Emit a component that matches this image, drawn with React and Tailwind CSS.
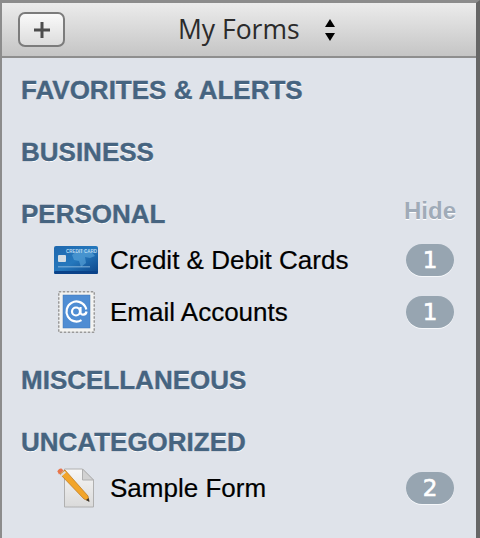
import React from 'react';

const CardIcon = () => (
  <svg width="44" height="28" viewBox="0 0 44 28">
    <defs>
      <linearGradient id="card" x1="0" y1="0" x2="1" y2="1">
        <stop offset="0" stopColor="#1f68ae" />
        <stop offset="0.5" stopColor="#2578bd" />
        <stop offset="1" stopColor="#0b4488" />
      </linearGradient>
    </defs>
    <rect width="44" height="28" rx="2" fill="url(#card)" />
    <path d="M18 9c4-4 10-6 15-5 3 1 6 3 8 6l-5 2-5-1 1 6-5 4-2-6-5-1z" fill="#62acdf" opacity="0.55" />
    <text x="12" y="7" fontSize="4.500" fontWeight="700" fill="#bcdcf2" fontFamily="Liberation Sans, sans-serif">CREDIT CARD</text>
    <rect x="4" y="9" width="8" height="7" rx="1" fill="#d3dde4" />
    <rect x="4" y="20" width="32" height="1.500" fill="#8fbde0" opacity="0.6" />
    <rect y="25" width="44" height="3" rx="1.500" fill="#0a4289" />
  </svg>
);

const StampIcon = () => (
  <svg width="37" height="42" viewBox="0 0 37 42">
    <rect x="0.750" y="0.750" width="35.500" height="40.500" fill="#f3f3f1" stroke="#9a9a9a" strokeWidth="1.500" strokeDasharray="2.500 1.500" />
    <rect x="5" y="4" width="27" height="33" fill="#4f8dd3" stroke="#3d76b8" strokeWidth="0.500" />
    <circle cx="18.500" cy="20.500" r="10" fill="none" stroke="#fff" strokeWidth="2.200" strokeDasharray="50 13" transform="rotate(60 18.500 20.500)" />
    <circle cx="18" cy="20.500" r="4" fill="none" stroke="#fff" strokeWidth="2.200" />
    <path d="M22.500 16v5.500c0 3 5.500 3 6-1" fill="none" stroke="#fff" strokeWidth="2.200" />
  </svg>
);

const DocIcon = () => (
  <svg width="38" height="40" viewBox="0 0 38 40">
    <defs>
      <linearGradient id="doc" x1="0" y1="0" x2="0" y2="1">
        <stop offset="0" stopColor="#f7f7f7" />
        <stop offset="1" stopColor="#dadada" />
      </linearGradient>
    </defs>
    <path d="M7.500 1h18l11 11v27h-29z" fill="url(#doc)" stroke="#b0b0b0" strokeWidth="1" />
    <path d="M25.500 1v11h11z" fill="#d2d2d2" stroke="#b0b0b0" strokeWidth="1" />
    <path d="M3 6l5-4 23 26 1 5-5-2z" fill="#f2a52a" stroke="#b9741a" strokeWidth="0.700" />
    <path d="M0.500 3.500c0-2 2.500-3.500 4-3l2 2-4.500 4z" fill="#e8754a" />
    <path d="M3 7l4.500-4 1.500 1.500-4.500 4z" fill="#dcdcdc" />
    <path d="M29 32l2.500-2 1 4z" fill="#333" />
  </svg>
);

const Badge = ({ count }) => (
  <span className="flex h-8 w-12 items-center justify-center rounded-full bg-[#97a5b1] text-[23px] text-white shadow-[0_1px_0_#f5f7fa] [-webkit-text-stroke:0.6px_#ffffff] font-['DejaVu_Sans',sans-serif]">
    {count}
  </span>
);

const Row = ({ icon, label, count }) => (
  <div className="flex h-[52px] items-center pl-[52px] pr-[22px]">
    <div className="flex w-[56px] justify-center pr-[12px]">{icon}</div>
    <span className="flex-1 pt-px text-[26px] text-black [-webkit-text-stroke:0.2px_#000000] font-['Liberation_Sans',sans-serif]">{label}</span>
    <Badge count={count} />
  </div>
);

const Section = ({ title, action, children }) => (
  <section className="pb-5">
    <div className="flex h-[42px] items-center justify-between pt-0.5 pl-[19px] pr-5">
      <h2 className="text-[26px] font-bold text-[#466480] [-webkit-text-stroke:0.4px_#466480] [text-shadow:0_1px_0_#fff] font-['Liberation_Sans',sans-serif]">{title}</h2>
      {action && <span className="text-[24px] font-bold text-[#a0abb8] [text-shadow:0_1px_0_#fff] -translate-y-[3px] font-['Liberation_Sans',sans-serif]">{action}</span>}
    </div>
    {children}
  </section>
);

const App = () => {
  return (
    <div className="h-[538px] w-[480px] overflow-hidden border-t-[3px] border-r-4 border-l-2 border-t-[#8c8c8c] border-r-[#666666] border-l-[#8c8c8c] bg-[#dfe3ea]">
      <header className="flex h-[55px] items-center border-b-2 border-[#8e8e8e] bg-gradient-to-b from-[#ececec] to-[#c5c5c5] pl-4">
        <button className="flex h-[35px] w-[47px] items-center justify-center rounded-[7px] border-2 border-[#7c7c7c] bg-gradient-to-b from-[#fafafa] to-[#dcdcdc]">
          <svg width="16" height="16" viewBox="0 0 16 16">
            <path d="M8 0v16M0 8h16" stroke="#4d4d4d" strokeWidth="3" />
          </svg>
        </button>
        <h1 className="ml-[113px] text-[26.500px] leading-none text-[#2b2b2b] font-['Open_Sans',sans-serif]">My Forms</h1>
        <svg className="ml-6" width="12" height="24" viewBox="0 0 12 24">
          <path d="M6 1l5 8H1zM1 15h10l-5 8z" fill="#000" />
        </svg>
      </header>
      <main className="pt-2.5">
        <Section title="FAVORITES & ALERTS" />
        <Section title="BUSINESS" />
        <Section title="PERSONAL" action="Hide">
          <Row icon={<CardIcon />} label="Credit & Debit Cards" count="1" />
          <Row icon={<StampIcon />} label="Email Accounts" count="1" />
        </Section>
        <Section title="MISCELLANEOUS" />
        <Section title="UNCATEGORIZED">
          <Row icon={<DocIcon />} label="Sample Form" count="2" />
        </Section>
      </main>
    </div>
  );
};

export default App;
